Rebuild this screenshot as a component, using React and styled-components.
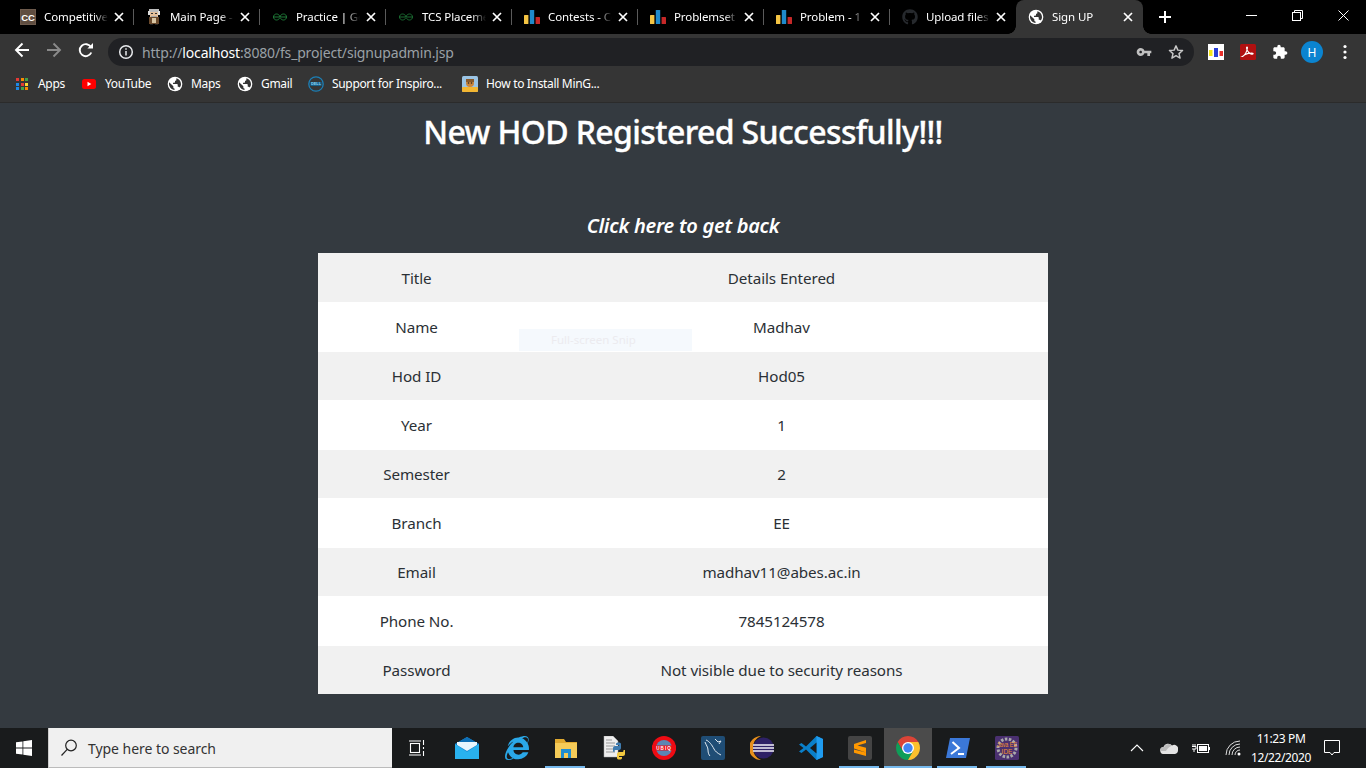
import React from 'react';
import styled, { createGlobalStyle } from 'styled-components';
import { FaGithub, FaInternetExplorer } from 'react-icons/fa';

const Global = createGlobalStyle`
  html, body { margin: 0; padding: 0; background: #343a40; }
  * { box-sizing: border-box; }
  body { font-family: "Noto Sans", "Open Sans", sans-serif; overflow: hidden; }
`;

const Screen = styled.div`
  width: 1366px; height: 768px; display: flex; flex-direction: column; overflow: hidden;
`;
const TabStrip = styled.div`
  height: 34px; background: #000; display: flex; align-items: stretch; padding-left: 8px; flex: none;
`;
const Tab = styled.div`
  position: relative; width: ${p => (p.$active ? 127 : 126)}px; display: flex; align-items: center; padding: 0 7px 0 12px; gap: 8px;
  color: #fff; font-size: 11.5px; flex: none;
  ${p => p.$active ? `background:#353535; border-radius: 8px 8px 0 0;
    &::before, &::after { content:""; position:absolute; bottom:0; width:8px; height:8px; }
    &::before { left:-8px; background: radial-gradient(circle at 0 0, #000 7.5px, #353535 8px); }
    &::after { right:-8px; background: radial-gradient(circle at 100% 0, #000 7.5px, #353535 8px); }` : `
    &::after { content:""; position:absolute; right:0; top:9px; height:16px; width:1px; background:#5a5a5a; }`}
  ${p => p.$flush ? `&::after { display:none; }` : ''}
`;
const TabTitle = styled.span`
  flex: 1; min-width: 0; white-space: nowrap; overflow: hidden; letter-spacing: -0.1px; padding-bottom: 1px; margin-right: -5px;
  -webkit-mask-image: linear-gradient(90deg, #000 78%, transparent 100%);
  mask-image: linear-gradient(90deg, #000 78%, transparent 100%);
`;
const Fav = styled.span`
  width: 16px; height: 16px; flex: none; display: flex; align-items: center; justify-content: center;
  svg { display: block; }
`;
const NewTab = styled.div`
  width: 28px; margin-left: 8px; display: flex; align-items: center; justify-content: center;
`;
const WindowControls = styled.div`
  margin-left: auto; display: flex;
`;
const WinButton = styled.div`
  width: 46px; height: 30px; display: flex; align-items: center; justify-content: center;
`;
const Toolbar = styled.div`
  height: 32px; background: #353535; display: flex; align-items: center; padding: 0 5px 0 6px; flex: none;
`;
const ToolBtn = styled.div`
  width: ${p => p.$w || 32}px; height: 28px; display: flex; align-items: center; justify-content: center; flex: none;
`;
const Address = styled.div`
  flex: 1; height: 28px; margin: 4px 6px 0; border-radius: 14px; background: #202124; display: flex; align-items: center; padding: 0 2px 0 10px;
`;
const Url = styled.div`
  margin-left: 8px; flex: 1; font-size: 14px; color: #9aa0a6; letter-spacing: -0.17px; white-space: nowrap;
  b { color: #fff; font-weight: 400; }
`;
const RightTools = styled.div`
  display: flex; margin-top: 4px;
`;
const Avatar = styled.div`
  width: 22px; height: 22px; border-radius: 50%; background: #0b84d0; color: #fff; font-size: 12px; display: flex; align-items: center; justify-content: center;
`;
const Bookmarks = styled.div`
  height: 37px; background: #353535; border-bottom: 1px solid #2b2b2b; display: flex; align-items: center; padding-left: 14px; gap: 16px; flex: none;
`;
const Bookmark = styled.div`
  display: flex; align-items: center; gap: 8px; color: #fff; font-size: 12px;
`;
const BookmarkLabel = styled.span`
  width: ${p => p.$w}px; white-space: nowrap; letter-spacing: -0.33px; padding-bottom: 2px;
`;
const Page = styled.main`
  flex: 1; background: #343a40; display: flex; flex-direction: column; align-items: center; padding-top: 10px; color: #fff; min-height: 0;
`;
const Heading = styled.h1`
  margin: 0; font-size: 32px; line-height: 38px; font-weight: 500; letter-spacing: -0.62px; white-space: nowrap; -webkit-text-stroke: 0.35px #fff;
`;
const BackLink = styled.a`
  margin-top: 63px; font-size: 20px; line-height: 24px; font-weight: 600; font-style: italic; color: #fff; letter-spacing: -0.27px;
`;
const TableWrap = styled.div`
  position: relative; margin-top: 15px; width: 730px;
`;
const Table = styled.table`
  width: 730px; border-collapse: collapse; table-layout: fixed; color: #2b3035; background: #fff; font-size: 15.2px; letter-spacing: -0.08px;
`;
const Row = styled.tr`
  height: ${p => p.$h}px; background: ${p => (p.$odd ? '#f1f1f1' : '#fff')};
`;
const Cell = styled.td`
  padding: 0; text-align: center; width: ${p => p.$w || 'auto'}; line-height: 24px;
`;
const SnipHint = styled.div`
  position: absolute; left: 201px; top: 76px; width: 173px; height: 22px; background: #f5f9fd; color: #ecebef; font-size: 11.5px; display: flex; align-items: center; padding: 0 0 2px 32px;
`;
const Taskbar = styled.footer`
  height: 40px; background: #191b1c; display: flex; align-items: stretch; flex: none;
`;
const Start = styled.div`
  width: 48px; display: flex; align-items: center; justify-content: center;
`;
const Search = styled.div`
  width: 344px; background: #f0f0f0; border-bottom: 1px solid #bbb; border-left: 1px solid #ccc; display: flex; align-items: center; padding: 1px 0 0 11px; gap: 10px; color: #333; font-size: 14px; letter-spacing: -0.05px;
`;
const TaskCell = styled.div`
  position: relative; width: ${p => p.$w || 49}px; display: flex; align-items: center; justify-content: center; flex: none;
  ${p => p.$active ? 'background:#4b4b4b; width:48px; margin-right:1px;' : ''}
  ${p => (p.$on || p.$active) ? `&::after { content:""; position:absolute; bottom:0; height:2px; left:${p.$active ? 0 : 4}px; right:${p.$active ? 0 : 5}px; background:#76b9ed; }` : ''}
`;
const Tray = styled.div`
  margin-left: auto; display: flex; align-items: stretch; padding-right: 14px;
`;
const TrayCell = styled.div`
  width: ${p => p.$w || 32}px; display: flex; align-items: center; justify-content: center; flex: none;
`;
const Clock = styled.div`
  width: 62px; display: flex; flex-direction: column; align-items: center; justify-content: center; color: #fff; font-size: 12px; line-height: 19px; white-space: nowrap; letter-spacing: -0.4px; padding-bottom: 1px;
`;

const CC = () => (
  <svg width="16" height="16" viewBox="0 0 16 16"><rect width="16" height="16" fill="#6d5a4c" /><rect x="1" y="1" width="14" height="14" fill="#5f4d40" /><text x="8" y="11.5" fontSize="9.5" fontWeight="800" fontFamily="Liberation Sans" fill="#fff" textAnchor="middle">CC</text></svg>
);
const Einstein = () => (
  <svg width="16" height="16" viewBox="0 0 16 16" shapeRendering="crispEdges">
    <rect x="3" y="0" width="10" height="3" fill="#bdbdbd" /><rect x="2" y="2" width="2" height="4" fill="#ddd" /><rect x="12" y="2" width="2" height="4" fill="#ddd" />
    <rect x="4" y="3" width="8" height="5" fill="#e5c09a" /><rect x="5" y="4" width="2" height="1" fill="#333" /><rect x="9" y="4" width="2" height="1" fill="#333" /><rect x="5" y="7" width="6" height="1" fill="#aaa" />
    <rect x="3" y="8" width="10" height="7" fill="#6b4a2c" /><rect x="6" y="9" width="4" height="5" fill="#d8c6a4" /><rect x="4" y="15" width="3" height="1" fill="#222" /><rect x="9" y="15" width="3" height="1" fill="#222" />
  </svg>
);
const Gfg = ({ c = '#1f7a38' }) => (
  <svg width="16" height="16" viewBox="0 0 16 16" fill="none" stroke={c} strokeWidth="1"><path d="M1 8h14" /><path d="M8 8c-.5-2-1.800-3-3.500-3C2.800 5 1.500 6.300 1.500 8s1.300 3 3 3c1.300 0 2.400-.6 3-1.800" /><path d="M8 8c.5-2 1.800-3 3.500-3 1.700 0 3 1.300 3 3s-1.300 3-3 3c-1.300 0-2.400-.6-3-1.800" /></svg>
);
const Bars = () => (
  <svg width="16" height="16" viewBox="0 0 16 16"><rect x="0" y="6" width="4.400" height="9" rx=".6" fill="#f4c443" /><rect x="5.800" y="1" width="4.400" height="14" rx=".6" fill="#1f8acb" /><rect x="11.600" y="8" width="4.400" height="7" rx=".6" fill="#c62828" /></svg>
);
const Globe = ({ bg = '#353535' }) => (
  <svg width="16" height="16" viewBox="0 0 24 24"><circle cx="12" cy="12" r="11" fill="#fff" /><path fill={bg} d="M3.200 9.500 9.500 15.500v1.200c0 1 .8 1.900 1.800 1.900v2.300C6.600 20.300 3 16.400 3 12c0-.9.07-1.700.2-2.500zM14 3.300c3.900.9 7 4.500 7 8.700 0 2.100-.8 4-2 5.400-.3-.8-1-1.400-1.900-1.400h-1v-3c0-.6-.4-1-1-1H9v-2h2c.6 0 1-.4 1-1V7h1c.6 0 1-.5 1-1z" /></svg>
);
const Close = ({ size = 10, w = 1.7, c = '#fff' }) => (
  <svg width={size} height={size} viewBox="0 0 10 10" stroke={c} strokeWidth={w}><path d="M1 1l8 8M9 1l-8 8" /></svg>
);
const AppsGrid = () => {
  const cs = ['#e53935', '#fb8c00', '#43a047', '#1e88e5', '#e53935', '#fdd835', '#1e88e5', '#43a047', '#fb8c00'];
  return (
    <svg width="16" height="16" viewBox="0 0 16 16" shapeRendering="crispEdges">
      {cs.map((c, i) => <rect key={i} x={2 + (i % 3) * 4.5} y={2 + Math.floor(i / 3) * 4.5} width="3" height="3" fill={c} />)}
    </svg>
  );
};
const YouTube = () => (
  <svg width="16" height="16" viewBox="0 0 16 16"><rect x="1" y="3" width="14" height="10" rx="2.500" fill="#f00" /><path d="M6.500 5.800v4.400L10.300 8z" fill="#fff" /></svg>
);
const Dell = () => (
  <svg width="16" height="16" viewBox="0 0 16 16"><circle cx="8" cy="8" r="7.200" fill="none" stroke="#1c7fb6" strokeWidth="1.300" /><rect x="2.500" y="6" width="11" height="4" fill="#15618c" /><text x="8" y="9.400" fontSize="3.800" fontWeight="700" fontFamily="Liberation Sans" fill="#8fd0ee" textAnchor="middle">DELL</text></svg>
);
const MingIcon = () => (
  <svg width="16" height="16" viewBox="0 0 16 16"><rect width="16" height="16" rx="1.500" fill="#9bc4e4" /><rect y="11" width="16" height="5" rx="1" fill="#f2b632" /><circle cx="8" cy="7" r="4" fill="#c9843a" /><rect x="4" y="3" width="8" height="3" fill="#8a5a2a" /><circle cx="6.500" cy="7" r=".8" fill="#222" /><circle cx="9.500" cy="7" r=".8" fill="#222" /></svg>
);
const Acrobat = () => (
  <svg width="16" height="16" viewBox="0 0 16 16"><rect width="16" height="16" rx="1.500" fill="#b01010" /><path d="M2.500 12.500c2.500-1.500 4.300-4.800 4.800-8 .2-1.300.1-1.500-.3-1.500-.6 0-.5 1.700.5 3.700 1.100 2 2.500 3.200 4 3.400 1.200.1 1.700-.4 1.500-.7-.3-.4-2.500-.4-5.500.3-2 .5-3.800 1.500-4.800 2.800z" fill="none" stroke="#fff" strokeWidth="1.200" /></svg>
);
const Ext = () => (
  <svg width="16" height="16" viewBox="0 0 16 16"><rect width="16" height="16" fill="#fff" /><rect x="1" y="6" width="3.500" height="6" fill="#f5e616" /><rect x="6" y="4" width="4" height="9" fill="#2a3fd6" /><rect x="11.500" y="7" width="3.500" height="5" fill="#e8302c" /></svg>
);
const Puzzle = () => (
  <svg width="16" height="16" viewBox="0 0 24 24"><path fill="#fff" d="M20.500 11H19V7c0-1.100-.9-2-2-2h-4V3.500C13 2.120 11.880 1 10.500 1S8 2.120 8 3.500V5H4c-1.100 0-1.990.9-1.990 2v3.800H3.500c1.490 0 2.700 1.210 2.700 2.700s-1.210 2.700-2.700 2.700H2V20c0 1.100.9 2 2 2h3.800v-1.500c0-1.490 1.210-2.700 2.700-2.700 1.490 0 2.700 1.210 2.700 2.700V22H17c1.100 0 2-.9 2-2v-4h1.500c1.380 0 2.500-1.120 2.500-2.500S21.880 11 20.500 11z" /></svg>
);
const Key = () => (
  <svg width="16" height="16" viewBox="0 0 24 24"><path fill="#c0c0c0" d="M12.650 10C11.830 7.670 9.610 6 7 6c-3.310 0-6 2.690-6 6s2.690 6 6 6c2.610 0 4.830-1.670 5.650-4H17v4h4v-4h2v-4H12.650zM7 14c-1.100 0-2-.9-2-2s.9-2 2-2 2 .9 2 2-.9 2-2 2z" /></svg>
);
const Star = () => (
  <svg width="16" height="16" viewBox="0 0 24 24"><path fill="none" stroke="#c8c8c8" strokeWidth="2.200" strokeLinejoin="round" d="M12 2.800l2.800 6.400 7 .6-5.300 4.600 1.600 6.800L12 17.600l-6.100 3.600 1.600-6.800L2.200 9.800l7-.6z" /></svg>
);
const Info = () => (
  <svg width="16" height="16" viewBox="0 0 16 16" fill="none" stroke="#e8eaed" strokeWidth="1.500"><circle cx="8" cy="8" r="6.300" /><path d="M8 7v4.500M8 4.300v1.500" /></svg>
);
const Arrow = ({ c, flip }) => (
  <svg width="16" height="16" viewBox="0 0 16 16" fill="none" stroke={c} strokeWidth="1.900" style={flip ? { transform: 'scaleX(-1)' } : undefined}><path d="M15 8H2M8.500 1.500 2 8l6.500 6.500" /></svg>
);
const Reload = () => (
  <svg width="16" height="16" viewBox="0 0 16 16" fill="none"><path d="M13.300 10.500a6 6 0 1 1-.3-5.300" stroke="#fff" strokeWidth="1.900" /><path d="M15 1v5.600H9.400z" fill="#fff" /></svg>
);
const Menu = () => (
  <svg width="4" height="16" viewBox="0 0 4 16" fill="#fff"><circle cx="2" cy="2.500" r="1.600" /><circle cx="2" cy="8" r="1.600" /><circle cx="2" cy="13.500" r="1.600" /></svg>
);
const Plus = () => (
  <svg width="12" height="12" viewBox="0 0 12 12" stroke="#fff" strokeWidth="2"><path d="M6 0v12M0 6h12" /></svg>
);
const WinMin = () => <svg width="11" height="11" viewBox="0 0 11 11" stroke="#fff"><path d="M0 5.500h11" /></svg>;
const WinRestore = () => <svg width="11" height="11" viewBox="0 0 11 11" fill="none" stroke="#fff"><rect x=".5" y="2.500" width="8" height="8" /><path d="M2.500 2.500v-2h8v8h-2" /></svg>;
const WinClose = () => <svg width="11" height="11" viewBox="0 0 11 11" stroke="#fff"><path d="M.5.500l10 10M10.500.500l-10 10" /></svg>;

const WinLogo = () => (
  <svg width="16" height="16" viewBox="0 0 16 16" fill="#fff"><path d="M0 2.300 6.500 1.400v6.200H0zM7.300 1.300 16 0v7.600H7.300zM0 8.400h6.500v6.200L0 13.700zM7.300 8.400H16V16l-8.700-1.300z" /></svg>
);
const Magnifier = () => (
  <svg width="18" height="18" viewBox="0 0 18 18" fill="none" stroke="#222" strokeWidth="1.200"><circle cx="11" cy="6.500" r="5.300" /><path d="M7.200 10.300 1.500 16.500" /></svg>
);
const TaskView = () => (
  <svg width="16" height="16" viewBox="0 0 16 16" fill="none" stroke="#fff" strokeWidth="1.100"><rect x="1.500" y="3.500" width="9" height="9" /><path d="M0 1h12M0 15h12M14.500 0v5M14.500 7v2M14.500 11v5" /></svg>
);
const Mail = () => (
  <svg width="24" height="22" viewBox="0 0 24 22"><path d="M0 7 12 0l12 7v15H0z" fill="#1a8fd6" /><path d="M0 7l12 7 12-7-12-7z" fill="#0f6fb5" /><path d="M2 5h20v3l-10 6L2 8z" fill="#e9f6fd" /><path d="M0 7l12 8 12-8v15H0z" fill="#29b1ee" /></svg>
);
const Folder = () => (
  <svg width="22" height="20" viewBox="0 0 22 20"><path d="M0 1h9l2 3h11v3H0z" fill="#e0a92f" /><rect y="5" width="22" height="15" fill="#f5cb58" /><rect x="6" y="11" width="10" height="9" fill="#1e8dd2" /><rect x="9" y="15" width="4" height="5" fill="#f5cb58" /></svg>
);
const PyDoc = () => (
  <svg width="24" height="24" viewBox="0 0 24 24"><path d="M1 0h9l5 5v16H1z" fill="#eee" stroke="#aaa" strokeWidth=".5" /><path d="M3 4h6M3 7h9M3 10h9M3 13h9M3 16h9" stroke="#999" /><path d="M10 15v-3c0-1 1-2 2-2h4v-1h-3V8c0-1 1-1.500 2.500-1.500S18 7 18 8v4c0 1-1 2-2 2h-3c-1 0-1.500.5-1.500 1v1h-1z" fill="#3f7cb0" /><path d="M22 15v3c0 1-1 2-2 2h-4v1h3v1c0 1-1 1.500-2.500 1.500S14 23 14 22v-4c0-1 1-2 2-2h3c1 0 1.500-.5 1.500-1v-1H22z" fill="#f3c93f" /></svg>
);
const RedBadge = () => (
  <svg width="24" height="24" viewBox="0 0 24 24"><circle cx="12" cy="12" r="12" fill="#ee0b13" /><circle cx="12" cy="12" r="8" fill="#5b86b4" /><rect x="0" y="9.500" width="24" height="5" fill="#ee0b13" /><text x="12" y="13.800" fontSize="4.600" fontWeight="700" fontFamily="Liberation Sans" fill="#fff" textAnchor="middle" letterSpacing="1">UBIQ</text></svg>
);
const Dolphin = () => (
  <svg width="24" height="24" viewBox="0 0 24 24"><rect width="24" height="24" rx="2" fill="#1f4d75" /><path d="M5 4c3 1 6 5 8 9 1 2 3 4 7 6M4 6c1 3 3 5 3 8s1 5 2 6M14 3l3 3 3-1-2 3" fill="none" stroke="#dfe8f0" strokeWidth="1" /></svg>
);
const Eclipse = () => (
  <svg width="24" height="24" viewBox="0 0 24 24"><path d="M11 0a12 12 0 0 0 0 24A13 13 0 0 1 11 0z" fill="#e8901d" /><circle cx="13.500" cy="12" r="10.500" fill="#2e2166" /><path d="M3 9h21M3 12h21M3 15h21" stroke="#f2f0f8" strokeWidth="1.300" /></svg>
);
const VsCode = () => (
  <svg width="24" height="24" viewBox="0 0 24 24"><path d="M17.500 0 24 3v18l-6.500 3L7 13.500l-4.500 3.500L0 15.500 4.500 12 0 8.500 2.500 7 7 10.500z" fill="#0a7fc9" /><path d="M17.500 0 24 3v18l-6.500 3z" fill="#1f9cf0" /><path d="M17.500 6.500 11 12l6.500 5.500z" fill="#191b1c" /></svg>
);
const Sublime = () => (
  <svg width="24" height="24" viewBox="0 0 24 24"><rect width="24" height="24" rx="2" fill="#444" /><path d="M18 4 6 8v4.500l12 4v-4.800L9.500 9.500 18 7zM6 13.500v3.200L18 20v-3.500z" fill="#ff9800" /></svg>
);
const Chrome = () => (
  <svg width="24" height="24" viewBox="0 0 24 24">
    <path d="M12 6h10.390A12 12 0 0 0 1.610 6L6.800 15z" fill="#db4437" />
    <path d="M6.800 15 1.610 6A12 12 0 0 0 12 24l5.200-9z" fill="#0f9d58" />
    <path d="M17.200 15 12 24A12 12 0 0 0 22.390 6H12z" fill="#fbc02d" />
    <circle cx="12" cy="12" r="6" fill="#fff" /><circle cx="12" cy="12" r="4.700" fill="#4285f4" />
  </svg>
);
const PowerShell = () => (
  <svg width="24" height="22" viewBox="0 0 24 22"><path d="M4 1h20l-4 20H0z" fill="#3b78d8" /><path d="M6.500 5 13 11l-8 6" fill="none" stroke="#fff" strokeWidth="2" /><path d="M12 17h6" stroke="#fff" strokeWidth="2" /></svg>
);
const JavaEE = () => (
  <svg width="24" height="24" viewBox="0 0 24 24"><rect width="24" height="24" rx="1.500" fill="#4a3070" /><circle cx="12" cy="12" r="9" fill="none" stroke="#aaa" strokeWidth="3" strokeDasharray="2.500 1.500" /><text x="12" y="11" fontSize="6.500" fontFamily="Liberation Sans" fill="#f09030" textAnchor="middle" textLength="20" lengthAdjust="spacingAndGlyphs">Java EE</text><text x="12" y="18" fontSize="6.500" fontFamily="Liberation Sans" fill="#f09030" textAnchor="middle">IDE</text></svg>
);
const Chevron = () => <svg width="14" height="8" viewBox="0 0 14 8" fill="none" stroke="#fff" strokeWidth="1.100"><path d="M1 7l6-6 6 6" /></svg>;
const Cloud = () => <svg width="18" height="12" viewBox="0 0 18 12"><path d="M4 12a3.500 3.500 0 0 1-.6-7A5 5 0 0 1 12 3.500 4 4 0 0 1 18 8a4 4 0 0 1-3 4z" fill="#e4e4e4" /><path d="M0 9a4 4 0 0 1 4-4 5 5 0 0 1 8-1.500C9 5 7 7 6 9z" fill="#bbb" /></svg>;
const Battery = () => <svg width="18" height="12" viewBox="0 0 18 12" fill="none" stroke="#fff"><rect x="5.500" y="2.500" width="11" height="8" /><rect x="7" y="4" width="8" height="5" fill="#fff" stroke="none" /><path d="M17.500 5v3" /><path d="M0 4.500h4v2.500H0M1 2v2M3 2v2M2 7v3" /></svg>;
const Wifi = () => <svg width="18" height="16" viewBox="0 0 18 16" fill="none" stroke="#ddd" strokeWidth="1"><path d="M1 15A14 14 0 0 1 15 1M4 15A11 11 0 0 1 15 4M7 15a8 8 0 0 1 8-8M10 15a5 5 0 0 1 5-5" /><circle cx="14" cy="14" r="1.500" fill="#fff" stroke="none" /></svg>;
const Bubble = () => <svg width="16" height="16" viewBox="0 0 16 16" fill="none" stroke="#fff" strokeWidth="1"><path d="M.5.500h15v12H10L8 15l-2-2.500H.5z" /></svg>;

const tabs = [
  { icon: <CC />, title: 'Competitive Programming' },
  { icon: <Einstein />, title: 'Main Page - Wikipedia' },
  { icon: <Gfg />, title: 'Practice | GeeksforGeeks' },
  { icon: <Gfg c="#1a6b31" />, title: 'TCS Placement Paper' },
  { icon: <Bars />, title: 'Contests - Codeforces' },
  { icon: <Bars />, title: 'Problemset - Codeforces' },
  { icon: <Bars />, title: 'Problem - 1 - Codeforces' },
  { icon: <FaGithub size={16} color="#26292d" />, title: 'Upload files to GitHub', flush: true },
];

const bookmarks = [
  { icon: <AppsGrid />, label: 'Apps', w: 27 },
  { icon: <YouTube />, label: 'YouTube', w: 46 },
  { icon: <Globe />, label: 'Maps', w: 30 },
  { icon: <Globe />, label: 'Gmail', w: 31 },
  { icon: <Dell />, label: 'Support for Inspiro...', w: 114 },
  { icon: <MingIcon />, label: 'How to Install MinG...', w: 114 },
];

const rows = [
  ['Title', 'Details Entered', 49],
  ['Name', 'Madhav', 50],
  ['Hod ID', 'Hod05', 48],
  ['Year', '1', 50],
  ['Semester', '2', 48],
  ['Branch', 'EE', 50],
  ['Email', 'madhav11@abes.ac.in', 48],
  ['Phone No.', '7845124578', 50],
  ['Password', 'Not visible due to security reasons', 48],
];

const apps = [
  { el: <TaskView /> },
  { el: <Mail />, w: 51 },
  { el: <FaInternetExplorer size={24} color="#2aa8e8" /> },
  { el: <Folder />, on: true },
  { el: <PyDoc /> },
  { el: <RedBadge /> },
  { el: <Dolphin /> },
  { el: <Eclipse /> },
  { el: <VsCode /> },
  { el: <Sublime />, on: true },
  { el: <Chrome />, active: true },
  { el: <PowerShell />, on: true },
  { el: <JavaEE />, on: true },
];

export default function App() {
  return (
    <Screen>
      <Global />
      <TabStrip>
        {tabs.map(t => (
          <Tab key={t.title} $flush={t.flush}>
            <Fav>{t.icon}</Fav>
            <TabTitle>{t.title}</TabTitle>
            <Fav><Close /></Fav>
          </Tab>
        ))}
        <Tab $active>
          <Fav><Globe /></Fav>
          <TabTitle>Sign UP</TabTitle>
          <Fav><Close /></Fav>
        </Tab>
        <NewTab><Plus /></NewTab>
        <WindowControls>
          <WinButton><WinMin /></WinButton>
          <WinButton><WinRestore /></WinButton>
          <WinButton><WinClose /></WinButton>
        </WindowControls>
      </TabStrip>
      <Toolbar>
        <ToolBtn><Arrow c="#fff" /></ToolBtn>
        <ToolBtn><Arrow c="#8a8a8a" flip /></ToolBtn>
        <ToolBtn><Reload /></ToolBtn>
        <Address>
          <Info />
          <Url>http://<b>localhost</b>:8080/fs_project/signupadmin.jsp</Url>
          <ToolBtn><Key /></ToolBtn>
          <ToolBtn><Star /></ToolBtn>
        </Address>
        <RightTools>
          <ToolBtn><Ext /></ToolBtn>
          <ToolBtn><Acrobat /></ToolBtn>
          <ToolBtn><Puzzle /></ToolBtn>
          <ToolBtn><Avatar>H</Avatar></ToolBtn>
          <ToolBtn $w={33}><Menu /></ToolBtn>
        </RightTools>
      </Toolbar>
      <Bookmarks>
        {bookmarks.map(b => (
          <Bookmark key={b.label}>
            <Fav>{b.icon}</Fav>
            <BookmarkLabel $w={b.w}>{b.label}</BookmarkLabel>
          </Bookmark>
        ))}
      </Bookmarks>
      <Page>
        <Heading>New HOD Registered Successfully!!!</Heading>
        <BackLink>Click here to get back</BackLink>
        <TableWrap>
          <Table>
            <tbody>
              {rows.map((r, i) => (
                <Row key={r[0]} $h={r[2]} $odd={i % 2 === 0}>
                  <Cell $w="197px">{r[0]}</Cell>
                  <Cell>{r[1]}</Cell>
                </Row>
              ))}
            </tbody>
          </Table>
          <SnipHint>Full-screen Snip</SnipHint>
        </TableWrap>
      </Page>
      <Taskbar>
        <Start><WinLogo /></Start>
        <Search><Magnifier />Type here to search</Search>
        {apps.map((a, i) => (
          <TaskCell key={i} $w={a.w} $on={a.on} $active={a.active}>{a.el}</TaskCell>
        ))}
        <Tray>
          <TrayCell><Chevron /></TrayCell>
          <TrayCell><Cloud /></TrayCell>
          <TrayCell><Battery /></TrayCell>
          <TrayCell $w={33}><Wifi /></TrayCell>
          <Clock><span>11:23 PM</span><span>12/22/2020</span></Clock>
          <TrayCell $w={40}><Bubble /></TrayCell>
        </Tray>
      </Taskbar>
    </Screen>
  );
}
